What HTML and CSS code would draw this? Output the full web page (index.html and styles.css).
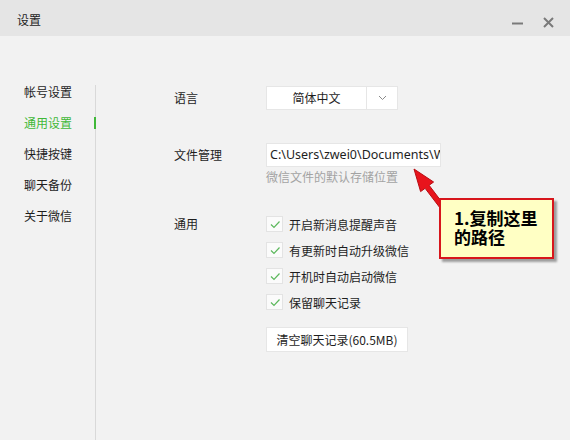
FILE: index.html
```html
<!DOCTYPE html>
<html lang="zh-CN">
<head>
  <meta charset="UTF-8">
  <meta name="viewport" content="width=device-width, initial-scale=1.0">
  <title>设置</title>
  <link rel="stylesheet" href="styles.css">
</head>
<body>
  <div class="window">
    <!-- Title bar -->
    <div class="titlebar">
      <span class="title">设置</span>
      <div class="win-btns">
        <svg class="btn-min" width="12" height="12" viewBox="0 0 12 12"><path d="M0 6.5h11" stroke="#7a7a7a" stroke-width="2"/></svg>
        <svg class="btn-close" width="11" height="11" viewBox="0 0 11 11"><path d="M1 1l9 9M10 1l-9 9" stroke="#7a7a7a" stroke-width="2"/></svg>
      </div>
    </div>

    <div class="main">
      <!-- Left menu -->
      <ul class="menu">
        <li>帐号设置</li>
        <li class="active">通用设置</li>
        <li>快捷按键</li>
        <li>聊天备份</li>
        <li>关于微信</li>
      </ul>
      <div class="divider"></div>

      <!-- Settings panel -->
      <div class="panel">
        <div class="row row-lang">
          <div class="label">语言</div>
          <div class="select">
            <span class="select-value">简体中文</span>
            <span class="select-arrow">
              <svg width="9" height="6" viewBox="0 0 9 6"><path d="M1 1l3.5 3.5L8 1" fill="none" stroke="#8a8a8a" stroke-width="1"/></svg>
            </span>
          </div>
        </div>

        <div class="row row-file">
          <div class="label">文件管理</div>
          <div>
            <div class="path-box">C:\Users\zwei0\Documents\WeChat Files</div>
            <div class="hint">微信文件的默认存储位置</div>
          </div>
        </div>

        <div class="row row-general">
          <div class="label">通用</div>
          <div>
            <ul class="checks">
              <li><span class="box"><svg width="14" height="14" viewBox="0 0 14 14"><path d="M3 7.5l3 3 5.5-6" fill="none" stroke="#5cb85c" stroke-width="1.2"/></svg></span>开启新消息提醒声音</li>
              <li><span class="box"><svg width="14" height="14" viewBox="0 0 14 14"><path d="M3 7.5l3 3 5.5-6" fill="none" stroke="#5cb85c" stroke-width="1.2"/></svg></span>有更新时自动升级微信</li>
              <li><span class="box"><svg width="14" height="14" viewBox="0 0 14 14"><path d="M3 7.5l3 3 5.5-6" fill="none" stroke="#5cb85c" stroke-width="1.2"/></svg></span>开机时自动启动微信</li>
              <li><span class="box"><svg width="14" height="14" viewBox="0 0 14 14"><path d="M3 7.5l3 3 5.5-6" fill="none" stroke="#5cb85c" stroke-width="1.2"/></svg></span>保留聊天记录</li>
            </ul>
            <button class="btn-clear">清空聊天记录(60.5MB)</button>
          </div>
        </div>
      </div>
    </div>

    <!-- Annotation pointing at the path box -->
    <svg class="note-arrow" width="570" height="440" viewBox="0 0 570 440">
      <polygon points="414,169 433.6,182 429.1,185.3 446,207.5 442,210.5 425.1,188.3 420.6,191.6" fill="#e8141c" stroke="#b80c12" stroke-width="1" stroke-linejoin="round"/>
    </svg>
    <div class="note">1.复制这里<br>的路径</div>
  </div>
</body>
</html>
```

FILE: styles.css
```css
* {
  box-sizing: border-box;
}

body {
  margin: 0;
  font-family: "Noto Sans CJK SC", "Noto Sans", sans-serif;
  font-size: 12px;
  color: #1e1e1e;
  background-color: #f2f2f2;
}

ul {
  list-style: none;
  margin: 0;
  padding: 0;
}

.window {
  position: relative;
  width: 570px;
  height: 440px;
  overflow: hidden;
  background-color: #f2f2f2;
}

/* title bar */
.titlebar {
  height: 36px;
  background-color: #e5e5e5;
  display: flex;
  align-items: center;
  justify-content: space-between;
  padding: 0 16px 0 17px;
}

.title {
  font-size: 12px;
  margin-top: 2px;
}

.win-btns {
  display: flex;
  align-items: center;
  gap: 19px;
  margin-top: 9px;
}

.win-btns svg {
  display: block;
}

.btn-min {
  margin-left: 2px;
}

/* left menu */
.main {
  display: flex;
  height: 404px;
}

.menu {
  width: 94px;
  padding-top: 40px;
}

.menu li {
  position: relative;
  height: 31px;
  line-height: 31px;
  padding-left: 24px;
}

.menu li.active {
  color: #3fb838;
}

.menu li.active::after {
  content: "";
  position: absolute;
  right: -2px;
  top: 10px;
  width: 2px;
  height: 12px;
  background-color: #3fb838;
}

.divider {
  width: 2px;
  margin-top: 49px;
  border-right: 1px solid #d9d9d9;
}

/* settings panel */
.panel {
  flex: 1;
  padding: 50px 0 0 78px;
}

.row {
  display: grid;
  grid-template-columns: 92px 1fr;
}

.label {
  line-height: 24px;
}

.row-file {
  margin-top: 33px;
}

.row-general {
  margin-top: 32px;
}

.row-general .label {
  line-height: 16px;
}

.select {
  display: flex;
  width: 132px;
  height: 24px;
  background-color: #fff;
  border: 1px solid #e6e6e6;
}

.select-value {
  width: 100px;
  text-align: center;
  line-height: 22px;
  border-right: 1px solid #e6e6e6;
}

.select-arrow {
  flex: 1;
  display: flex;
  align-items: center;
  justify-content: center;
}

.select-arrow svg {
  display: block;
}

.path-box {
  width: 175px;
  height: 24px;
  line-height: 22px;
  padding-left: 3px;
  font-family: "Noto Sans", "Noto Sans CJK SC", sans-serif;
  font-size: 12.5px;
  background-color: #fff;
  border: 1px solid #e6e6e6;
  white-space: nowrap;
  overflow: hidden;
}

.hint {
  color: #a3a3a3;
  margin-top: 3px;
  line-height: 14px;
}

.checks li {
  display: flex;
  align-items: center;
  height: 16px;
  margin-bottom: 10px;
}

.box {
  width: 17px;
  height: 16px;
  margin-right: 6px;
  background-color: #fbfbfb;
  border: 1px solid #e3e3e3;
  display: flex;
  align-items: center;
  justify-content: center;
}

.box svg {
  display: block;
}

.btn-clear {
  margin-top: 7px;
  height: 25px;
  width: 142px;
  padding: 0;
  font-family: inherit;
  font-size: 12px;
  color: #1e1e1e;
  background-color: #fff;
  border: 1px solid #e6e6e6;
}

/* annotation */
.note-arrow {
  position: absolute;
  left: 0;
  top: 0;
  pointer-events: none;
}

.note {
  position: absolute;
  left: 439px;
  top: 198px;
  width: 115px;
  height: 61px;
  padding: 8px 0 0 13px;
  background-color: #ffffc4;
  border: 2px solid #d7161c;
  box-shadow: 3px 3px 2px rgba(0, 0, 0, 0.35);
  font-size: 17px;
  font-weight: bold;
  line-height: 19px;
  color: #000;
}
```
